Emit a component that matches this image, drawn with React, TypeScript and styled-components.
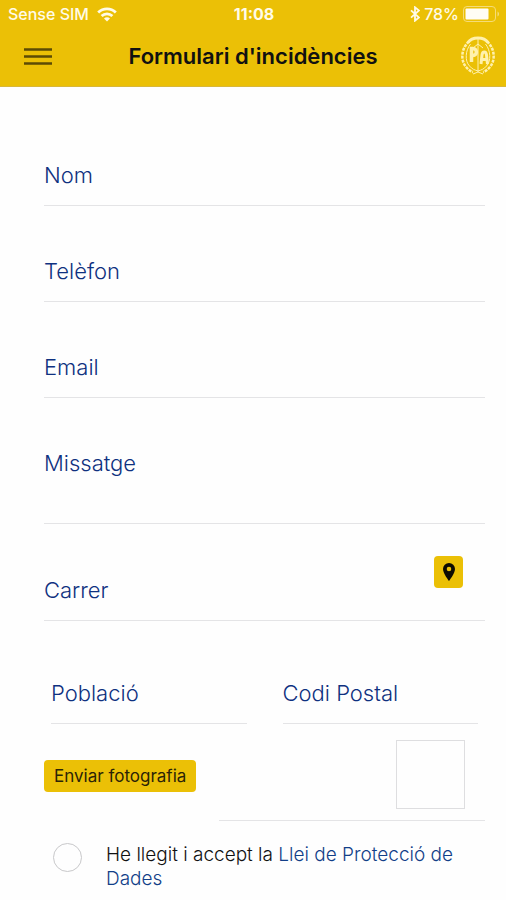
import React from "react";
import styled, { createGlobalStyle } from "styled-components";

const GlobalStyle = createGlobalStyle`
  *, *::before, *::after { box-sizing: border-box; }
  body {
    margin: 0;
    background: #fefefe;
    color: #111;
    font-family: Inter, "Liberation Sans", sans-serif;
  }
  button, input, textarea { font: inherit; color: inherit; }
`;

const yellow = "#ebc006";
const navy = "#0f3180";
const rule = "#e4e4e6";

const TopArea = styled.header`
  background: ${yellow};
  border-bottom: 1px solid #d8b73a;
`;

const StatusBar = styled.div`
  display: grid;
  grid-template-columns: 1fr auto 1fr;
  align-items: center;
  height: 28px;
  padding: 0 6px 0 8px;
  color: #fffbe8;
  font-size: 16px;
  font-weight: 500;
`;

const StatusGroup = styled.div<{ $end?: boolean }>`
  display: flex;
  align-items: center;
  justify-content: ${(p) => (p.$end ? "flex-end" : "flex-start")};
  gap: ${(p) => (p.$end ? "4px" : "8px")};
`;

const Battery = styled.span`
  display: flex;
  align-items: center;
  gap: 4px;
`;

const Clock = styled.time`
  font-weight: 700;
`;

const NavBar = styled.nav`
  display: grid;
  grid-template-columns: 1fr auto 1fr;
  align-items: center;
  height: 58px;
  padding: 0 10px 2px;
`;

const MenuButton = styled.button`
  display: flex;
  width: 28px;
  margin-left: 14px;
  padding: 0;
  border: 0;
  background: none;
`;

const Title = styled.h1`
  margin: 0;
  font-size: 22px;
  font-weight: 600;
  line-height: 28px;
`;

const Crest = styled.svg`
  justify-self: end;
`;

const Form = styled.form`
  padding: 23px 21px 8px 44px;
`;

const Field = styled.div<{ $top?: number }>`
  display: flex;
  align-items: flex-start;
  gap: 12px;
  min-width: 0;
  padding: ${(p) => p.$top ?? 51}px 0 16px;
  border-bottom: 1px solid ${rule};
`;

const Label = styled.label`
  flex: none;
  color: ${navy};
  font-size: 22px;
  font-weight: 300;
  line-height: 28px;
`;

const TextInput = styled.input`
  flex: 1;
  min-width: 0;
  height: 28px;
  padding: 0;
  border: 0;
  outline: 0;
  background: none;
  font-size: 22px;
`;

const TextArea = styled.textarea`
  flex: 1;
  min-width: 0;
  height: 58px;
  padding: 0;
  border: 0;
  outline: 0;
  resize: none;
  background: none;
  font-size: 22px;
  line-height: 28px;
`;

const StreetField = styled(Field)`
  align-items: flex-end;
  padding: 32px 22px 16px 0;
`;

const PinButton = styled.button`
  display: flex;
  align-items: center;
  justify-content: center;
  width: 29px;
  height: 32px;
  margin-bottom: 16px;
  padding: 0;
  border: 0;
  border-radius: 4px;
  background: ${yellow};
`;

const FieldPair = styled.div`
  display: grid;
  grid-template-columns: 1fr 1fr;
  gap: 36px;
  padding: 0 7px;
`;

const PhotoRow = styled.div`
  display: flex;
  align-items: flex-start;
  justify-content: space-between;
  gap: 23px;
`;

const PhotoButton = styled.button`
  flex: none;
  height: 32px;
  margin-top: 36px;
  padding: 0 10px;
  border: 0;
  border-radius: 4px;
  background: ${yellow};
  color: #2b2406;
  font-size: 17px;
  line-height: 24px;
`;

const PhotoSlot = styled.div`
  display: flex;
  flex: 1;
  justify-content: flex-end;
  padding: 16px 20px 11px 0;
  border-bottom: 1px solid ${rule};
`;

const PhotoPreview = styled.div`
  width: 69px;
  height: 69px;
  border: 1px solid #dedee0;
`;

const Consent = styled.div`
  display: flex;
  align-items: flex-start;
  gap: 24px;
  padding: 22px 9px 0;
`;

const ConsentBox = styled.input`
  appearance: none;
  flex: none;
  width: 29px;
  height: 29px;
  margin: 0;
  border: 1px solid #c8c8ca;
  border-radius: 50%;
  &:checked { background: ${yellow}; }
`;

const ConsentText = styled.label`
  font-size: 19px;
  font-weight: 300;
  line-height: 24px;
`;

const LawLink = styled.a`
  color: #123f88;
  text-decoration: none;
`;

const WifiIcon = () => (
  <svg width="20" height="15" viewBox="0 0 20 15" fill="none" stroke="#fffbe8" strokeWidth="2.8" aria-hidden="true">
    <path d="M1.2 5.6C6.2.7 13.8.7 18.8 5.6" />
    <path d="M4.6 9.1c3-2.9 7.8-2.9 10.8 0" />
    <path d="M7 11.4c1.7-1.6 4.3-1.6 6 0L10 14.5z" fill="#fffbe8" stroke="none" />
  </svg>
);

const BluetoothIcon = () => (
  <svg width="10" height="16" viewBox="0 0 10 16" fill="none" stroke="#fffbe8" strokeWidth="1.8" aria-hidden="true">
    <path d="M1 4.3l8 7.2-4 3.2V1.3l4 3.2-8 7.2" />
  </svg>
);

const BatteryIcon = () => (
  <svg width="37" height="16" viewBox="0 0 37 16" aria-hidden="true">
    <rect x="0.5" y="0.5" width="32" height="15" rx="3.5" fill="none" stroke="#f5dc78" />
    <rect x="2.5" y="2.5" width="23" height="11" rx="1" fill="#fffdf5" />
    <path d="M34.5 5.5c2 .8 2 4.2 0 5z" fill="#f5dc78" />
  </svg>
);

const MenuIcon = () => (
  <svg width="28" height="20" viewBox="0 0 28 20" stroke="#5c4b05" strokeWidth="2.4" aria-hidden="true">
    <path d="M0 3.5h28M0 10.5h28M0 17.5h28" />
  </svg>
);

const PinIcon = () => (
  <svg width="12" height="18" viewBox="0 0 12 18" aria-hidden="true">
    <path
      d="M6 0a6 6 0 0 0-6 6c0 4.4 6 12 6 12s6-7.6 6-12a6 6 0 0 0-6-6zm0 8.3a2.3 2.3 0 1 1 0-4.6 2.3 2.3 0 0 1 0 4.6z"
      fill="#0d0b02"
      fillRule="evenodd"
    />
  </svg>
);

const CrestIcon = () => (
  <Crest width="36" height="40" viewBox="0 0 36 40" fill="none" stroke="#fff1ad" role="img" aria-label="PA">
    <path
      d="M9 5.500C1.500 12-.2 24 6.500 31.500c2 2.200 4 3.800 6.500 4.500M27 5.500c7.500 6.500 9.200 18.500 2.500 26-2 2.200-4 3.800-6.500 4.500"
      strokeWidth="2.5"
      strokeDasharray="3 1"
    />
    <path d="M8 6.500c4-6 16-6 20 0" strokeWidth="3" />
    <path d="M10.500 8c-5 6-6 17-1 22 2.500 3 5 4 8.500 5 3.500-1 6-2 8.500-5 5-5 4-16-1-22M13 38l5-2 5 2" strokeWidth="1" />
    <path d="M18 3v33M18 8l5 4M18 8l-5 4" strokeWidth="1" />
    <path d="M11.500 26V12.500h1.500c4.500 0 4.500 7 0 7h-1.500" strokeWidth="3.5" />
    <path d="M21 28l1-9c.5-4 4-4 4.500 0l1 9M22 23.500h4.500" strokeWidth="3" />
  </Crest>
);

export default function App() {
  return (
    <>
      <GlobalStyle />
      <TopArea>
        <StatusBar>
          <StatusGroup>
            <span>Sense SIM</span>
            <WifiIcon />
          </StatusGroup>
          <Clock>11:08</Clock>
          <StatusGroup $end>
            <BluetoothIcon />
            <Battery>
              <span>78%</span>
              <BatteryIcon />
            </Battery>
          </StatusGroup>
        </StatusBar>
        <NavBar>
          <MenuButton type="button" aria-label="Menú">
            <MenuIcon />
          </MenuButton>
          <Title>Formulari d'incidències</Title>
          <CrestIcon />
        </NavBar>
      </TopArea>
      <Form>
        <Field>
          <Label htmlFor="nom">Nom</Label>
          <TextInput id="nom" />
        </Field>
        <Field>
          <Label htmlFor="telefon">Telèfon</Label>
          <TextInput id="telefon" type="tel" />
        </Field>
        <Field>
          <Label htmlFor="email">Email</Label>
          <TextInput id="email" type="email" />
        </Field>
        <Field>
          <Label htmlFor="missatge">Missatge</Label>
          <TextArea id="missatge" />
        </Field>
        <StreetField>
          <Label htmlFor="carrer">Carrer</Label>
          <TextInput id="carrer" />
          <PinButton type="button" aria-label="Ubicació">
            <PinIcon />
          </PinButton>
        </StreetField>
        <FieldPair>
          <Field $top={58}>
            <Label htmlFor="poblacio">Població</Label>
            <TextInput id="poblacio" />
          </Field>
          <Field $top={58}>
            <Label htmlFor="codi">Codi Postal</Label>
            <TextInput id="codi" inputMode="numeric" />
          </Field>
        </FieldPair>
        <PhotoRow>
          <PhotoButton type="button">Enviar fotografia</PhotoButton>
          <PhotoSlot>
            <PhotoPreview />
          </PhotoSlot>
        </PhotoRow>
        <Consent>
          <ConsentBox id="accept" type="checkbox" />
          <ConsentText htmlFor="accept">
            He llegit i accept la <LawLink href="#llei">Llei de Protecció de Dades</LawLink>
          </ConsentText>
        </Consent>
      </Form>
    </>
  );
}
